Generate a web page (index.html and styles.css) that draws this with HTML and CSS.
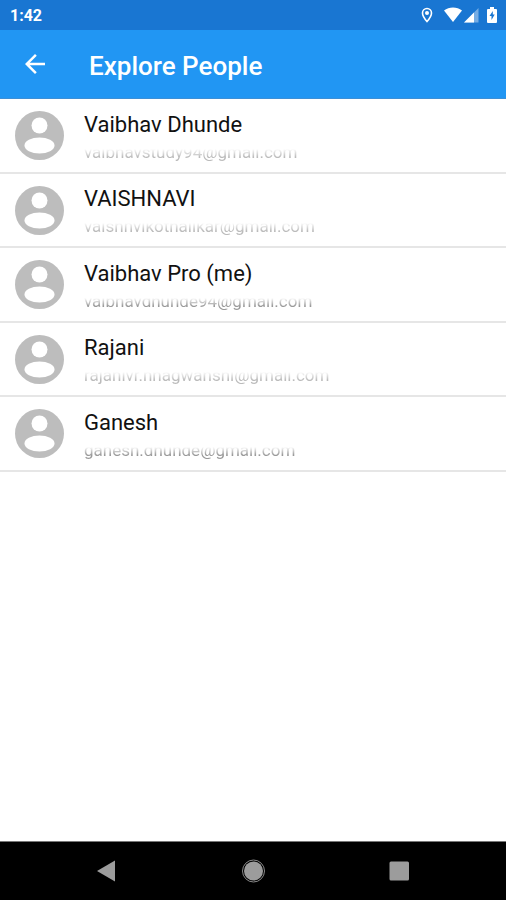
FILE: index.html
```html
<!DOCTYPE html>
<html lang="en">
<head>
<meta charset="utf-8">
<meta name="viewport" content="width=device-width, initial-scale=1">
<title>Explore People</title>
<link rel="stylesheet" href="styles.css">
</head>
<body>
<svg class="defs" aria-hidden="true">
  <symbol id="person" viewBox="0 0 49 49"><circle cx="24.500" cy="24.500" r="24.500" fill="#bdbdbd"/><circle cx="24.500" cy="14.500" r="8" fill="#fff"/><ellipse cx="24.500" cy="34.500" rx="15" ry="8" fill="#fff"/></symbol>
</svg>
<div class="status">
  <span>1:42</span>
  <div class="status-icons">
    <svg width="12" height="16" viewBox="0 0 12 16"><path d="M6 1.500a4.500 4.500 0 0 0-4.500 4.500C1.500 9.500 6 14.500 6 14.500S10.500 9.500 10.500 6A4.500 4.500 0 0 0 6 1.500z" fill="none" stroke="#fff" stroke-width="1.600"/><circle cx="6" cy="6" r="2" fill="#fff"/></svg>
    <svg class="wifi" width="20" height="16" viewBox="0 0 20 16"><path d="M1 3.500C6-.5 14-.5 19 3.500L10 15z" fill="#fff"/></svg>
    <svg width="16" height="16" viewBox="0 0 16 16"><path d="M1 15.500L15.500 1v14.500z" fill="#fff" opacity=".4"/><path d="M1 15.500L11 5.500v10z" fill="#fff"/></svg>
    <svg class="battery" width="12" height="18" viewBox="0 0 12 18"><path d="M4 1h4v2h2a1 1 0 0 1 1 1v12a1 1 0 0 1-1 1H2a1 1 0 0 1-1-1V4a1 1 0 0 1 1-1h2z" fill="#fff"/><path d="M6.800 5L3.500 10h2v4l3.200-5.500H6.800z" fill="#1976d2"/></svg>
  </div>
</div>
<header class="appbar">
  <button class="back" type="button" aria-label="Back"><svg width="30" height="30" viewBox="0 0 24 24"><path d="M20 11H7.830l5.590-5.590L12 4l-8 8 8 8 1.410-1.410L7.830 13H20v-2z" fill="#fff"/></svg></button>
  <h1>Explore People</h1>
</header>
<main>
  <ul class="people">
    <li><svg class="avatar"><use href="#person"/></svg><div><h2>Vaibhav Dhunde</h2><p class="faint">vaibhavstudy94@gmail.com</p></div></li>
    <li><svg class="avatar"><use href="#person"/></svg><div><h2>VAISHNAVI</h2><p class="faint">vaishnvikothalikar@gmail.com</p></div></li>
    <li><svg class="avatar"><use href="#person"/></svg><div><h2>Vaibhav Pro (me)</h2><p>vaibhavdhunde94@gmail.com</p></div></li>
    <li><svg class="avatar"><use href="#person"/></svg><div><h2>Rajani</h2><p class="faint">rajanivr.nnagwanshi@gmail.com</p></div></li>
    <li><svg class="avatar"><use href="#person"/></svg><div><h2>Ganesh</h2><p>ganesh.dhunde@gmail.com</p></div></li>
  </ul>
</main>
<nav class="navbar">
  <button type="button" aria-label="Back"><svg width="26" height="26" viewBox="0 0 26 26"><path d="M3 13L21 2.500v21z"/></svg></button>
  <button type="button" aria-label="Home"><svg width="26" height="26" viewBox="0 0 26 26"><circle cx="13.500" cy="13" r="9.500"/><circle cx="13.500" cy="13" r="11" class="ring"/></svg></button>
  <button type="button" aria-label="Recent apps"><svg width="26" height="26" viewBox="0 0 26 26"><rect x="3.500" y="3.500" width="19.500" height="19" rx="1.500"/></svg></button>
</nav>
</body>
</html>
```
FILE: styles.css
```css
* {
  box-sizing: border-box;
}

body {
  margin: 0;
  min-height: 100vh;
  display: flex;
  flex-direction: column;
  background: #fff;
  font-family: Roboto, "Liberation Sans", sans-serif;
}

svg {
  display: block;
}

.defs {
  position: absolute;
  width: 0;
  height: 0;
}

button {
  border: 0;
  padding: 0;
  background: none;
}

.status {
  height: 30px;
  padding: 0 8px 0 10px;
  display: flex;
  align-items: center;
  justify-content: space-between;
  background: #1976d2;
  color: #fff;
  font-size: 16px;
  font-weight: 700;
}

.status-icons {
  display: flex;
  align-items: center;
}

.wifi {
  margin-left: 10px;
}

.battery {
  margin-left: 7px;
}

.appbar {
  height: 69px;
  padding: 0 20px;
  display: flex;
  align-items: center;
  gap: 39px;
  border-bottom: 1px solid #3d8fd6;
  background: #2196f3;
  color: #fff;
}

.appbar h1 {
  margin: 0;
  padding-top: 3px;
  font-size: 26px;
  line-height: 30px;
  font-weight: 500;
}

main {
  flex: 1;
}

.people {
  margin: 0;
  padding: 0;
  list-style: none;
}

.people li {
  height: 75px;
  padding: 0 15px;
  display: flex;
  align-items: center;
  gap: 20px;
  border-bottom: 2px solid #e6e6e6;
}

.people li:nth-child(even) {
  height: 74px;
}

.avatar {
  width: 49px;
  height: 49px;
  flex: none;
}

.people h2 {
  margin: 4px 0 0;
  font-size: 22px;
  line-height: 28px;
  font-weight: 400;
  color: #111;
}

/* Addresses are obscured: their upper part fades away. */
.people p {
  margin: 0;
  font-size: 17px;
  line-height: 26px;
  color: #999;
  -webkit-mask-image: linear-gradient(transparent 10px, #000 18px);
  mask-image: linear-gradient(transparent 10px, #000 18px);
}

.people .faint {
  color: #bbb;
}

.navbar {
  height: 59px;
  display: flex;
  align-items: center;
  justify-content: center;
  gap: 120px;
  border-top: 1px solid #777;
  background: #000;
}

.navbar svg {
  fill: #9c9c9c;
}

.navbar .ring {
  fill: none;
  stroke: #8a8a8a;
}
```
